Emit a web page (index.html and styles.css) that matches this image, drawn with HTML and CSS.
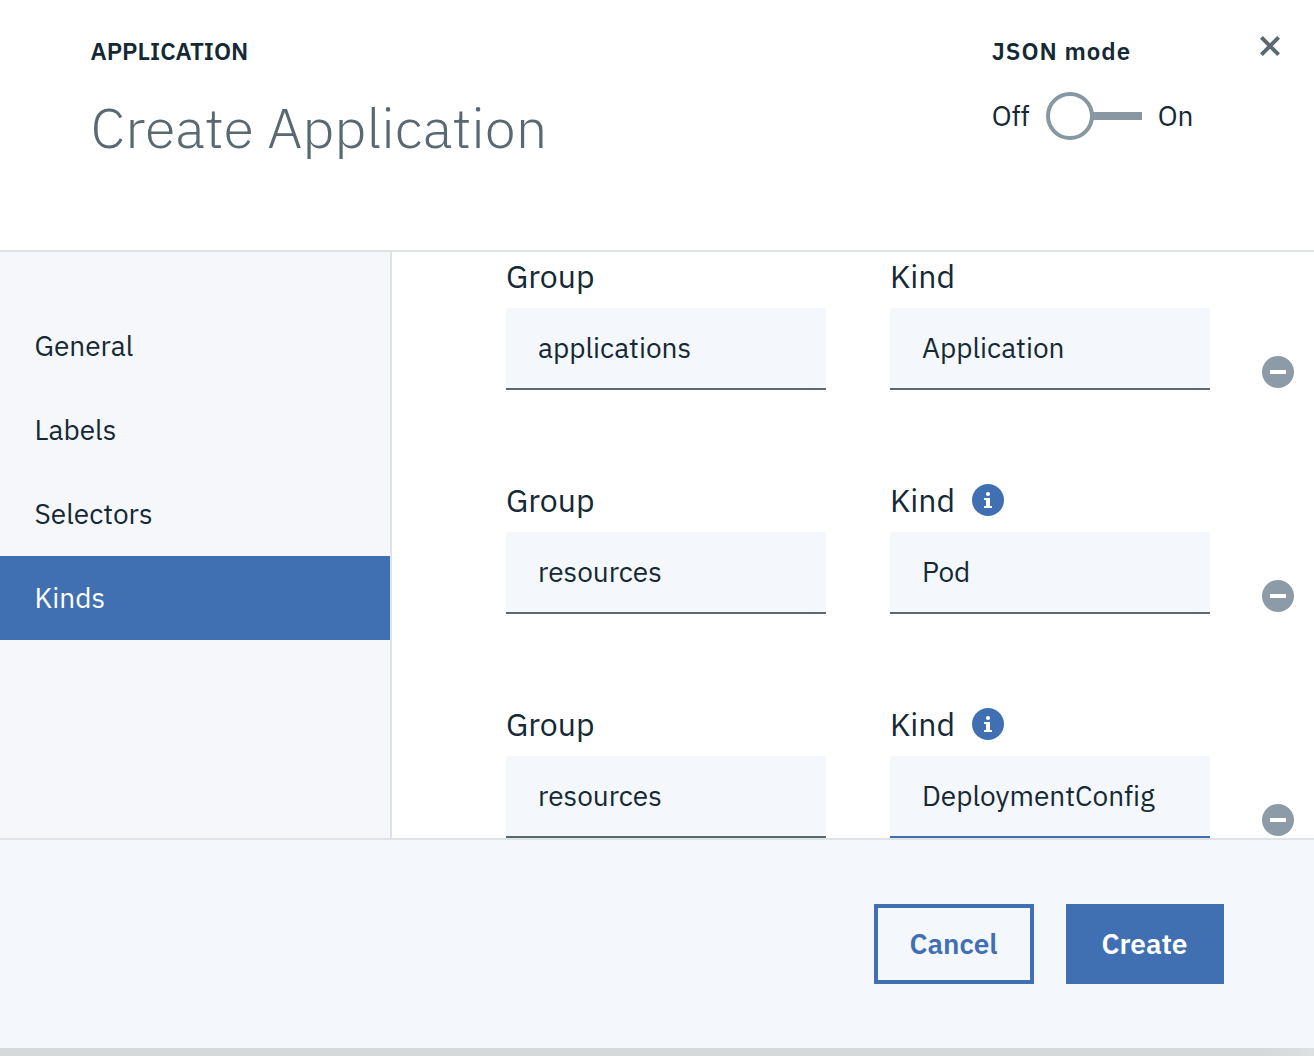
FILE: index.html
```html
<!DOCTYPE html>
<html lang="en">
<head>
<meta charset="utf-8">
<title>Create Application</title>
<link rel="stylesheet" href="styles.css">
</head>
<body>
<div class="modal">
  <header class="header">
    <div class="heading">
      <p class="label">APPLICATION</p>
      <h1 class="title">Create Application</h1>
    </div>
    <div class="mode">
      <p class="mode-label">JSON mode</p>
      <div class="toggle">
        <span class="off">Off</span>
        <svg class="switch" width="96" height="48" viewBox="0 0 96 48"><path d="M46 24h50" stroke="#8897a2" stroke-width="8"/><circle cx="24" cy="24" r="22" fill="#fff" stroke="#8897a2" stroke-width="4"/></svg>
        <span class="on">On</span>
      </div>
    </div>
    <button class="close" aria-label="Close"><svg width="20" height="20" viewBox="0 0 20 20"><path d="M1.4 1.4l17.2 17.2M18.6 1.4L1.4 18.6" stroke="#5a6872" stroke-width="4"/></svg></button>
  </header>
  <div class="body">
    <nav class="nav">
      <a class="item">General</a>
      <a class="item">Labels</a>
      <a class="item">Selectors</a>
      <a class="item active">Kinds</a>
    </nav>
    <main class="content">
      <div class="row">
        <label class="field"><span class="name">Group</span><input class="input" value="applications"></label>
        <label class="field"><span class="name">Kind</span><input class="input" value="Application"></label>
        <button class="remove" aria-label="Remove"><svg width="32" height="32" viewBox="0 0 32 32"><circle cx="16" cy="16" r="16" fill="#8c9ba5"/><path d="M8 14h16v4H8z" fill="#fff"/></svg></button>
      </div>
      <div class="row">
        <label class="field"><span class="name">Group</span><input class="input" value="resources"></label>
        <label class="field"><span class="name">Kind<svg class="info" width="32" height="32" viewBox="0 0 32 32"><circle cx="16" cy="16" r="16" fill="#4070b1"/><circle cx="16" cy="10" r="2.1" fill="#fff"/><path d="M12 14h6v8h2v2h-8v-2h2v-6h-2z" fill="#fff"/></svg></span><input class="input" value="Pod"></label>
        <button class="remove" aria-label="Remove"><svg width="32" height="32" viewBox="0 0 32 32"><circle cx="16" cy="16" r="16" fill="#8c9ba5"/><path d="M8 14h16v4H8z" fill="#fff"/></svg></button>
      </div>
      <div class="row">
        <label class="field"><span class="name">Group</span><input class="input" value="resources"></label>
        <label class="field"><span class="name">Kind<svg class="info" width="32" height="32" viewBox="0 0 32 32"><circle cx="16" cy="16" r="16" fill="#4070b1"/><circle cx="16" cy="10" r="2.1" fill="#fff"/><path d="M12 14h6v8h2v2h-8v-2h2v-6h-2z" fill="#fff"/></svg></span><input class="input focused" value="DeploymentConfig"></label>
        <button class="remove" aria-label="Remove"><svg width="32" height="32" viewBox="0 0 32 32"><circle cx="16" cy="16" r="16" fill="#8c9ba5"/><path d="M8 14h16v4H8z" fill="#fff"/></svg></button>
      </div>
    </main>
  </div>
  <footer class="footer">
    <button class="btn cancel">Cancel</button>
    <button class="btn create">Create</button>
  </footer>
</div>
</body>
</html>
```
FILE: styles.css
```css
* { box-sizing: border-box; }
body {
  margin: 0;
  height: 1056px;
  overflow: hidden;
  background: linear-gradient(90deg, #d5d9dc 0, #d5d9dc 1260px, #dde0e2 1314px);
  font-family: "IBM Plex Sans", Roboto, sans-serif;
  font-variant-ligatures: none;
  color: #152935;
}
p, h1 { margin: 0; }
button { border: 0; padding: 0; background: none; font: inherit; }
svg { display: block; flex: none; }
.modal { height: 1048px; display: flex; flex-direction: column; background: #fff; }
.header {
  height: 252px;
  flex: none;
  display: flex;
  align-items: flex-start;
  padding: 35px 34px 0 90.6px;
  border-bottom: 2px solid #dfe3e6;
}
.heading { flex: 1; }
.label, .mode-label { font-size: 24px; line-height: 32px; font-weight: 600; }
.title { margin-top: 24px; font-size: 56px; line-height: 72px; font-weight: 300; color: #5a6872; }
.mode { width: 268.3px; }
.mode-label { letter-spacing: 1px; }
.toggle { display: flex; align-items: center; margin-top: 25px; font-size: 28px; line-height: 48px; }
.off { width: 54.3px; }
.on { margin-left: 15.7px; }
.close { width: 20px; height: 20px; margin-top: 1px; }
.body { height: 586px; flex: none; display: flex; overflow: hidden; }
.nav { width: 392px; flex: none; padding-top: 52px; background: #f5f7fb; border-right: 2px solid #dfe3e6; }
.item { display: block; height: 84px; padding-left: 34.5px; font-size: 28px; line-height: 84px; }
.active { background: #4070b1; color: #fff; }
.content { flex: 1; padding-left: 114px; }
.row { display: flex; height: 224px; }
.field { width: 320px; margin-right: 64px; }
.name { display: flex; align-items: center; height: 56px; padding-bottom: 7px; font-size: 32px; line-height: 49px; }
.info { position: absolute; margin: 0 0 2px 82px; }
.input {
  display: block;
  width: 320px;
  height: 82px;
  padding: 0 32px 2px;
  border: 0;
  border-bottom: 2px solid #5a6872;
  border-radius: 0;
  outline: 0;
  background: #f4f7fb;
  color: #152935;
  font: 400 28px "IBM Plex Sans", Roboto, sans-serif;
  font-variant-ligatures: none;
}
.focused { border-bottom-color: #4070b1; }
.remove { width: 32px; height: 32px; margin: 104px 0 0 -12px; }
.footer {
  flex: 1;
  display: flex;
  justify-content: flex-end;
  gap: 32px;
  padding: 64px 90px 0 0;
  border-top: 2px solid #dfe3e6;
  background: #f4f7fb;
}
.btn { height: 80px; padding: 0 1px 2px 0; font-size: 28px; font-weight: 600; }
.cancel { width: 160px; border: 4px solid #4070b1; color: #4070b1; }
.create { width: 158px; background: #4070b1; color: #fff; }
```
